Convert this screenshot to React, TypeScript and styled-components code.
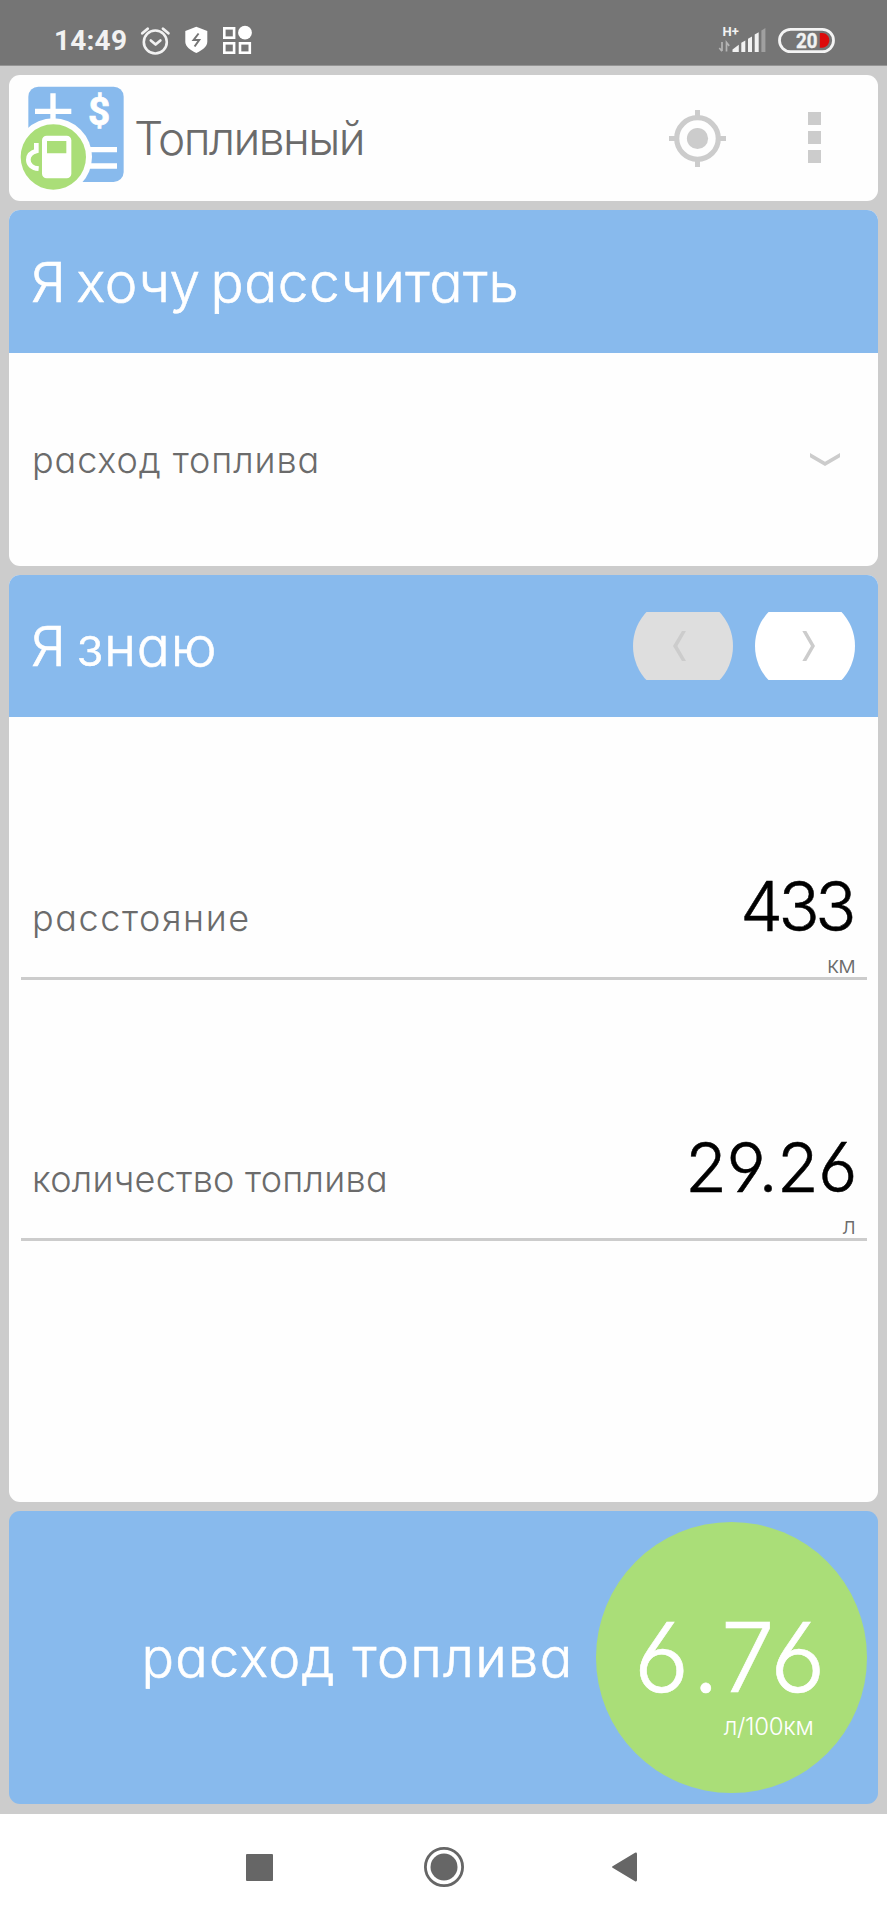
import React from "react";
import styled, { createGlobalStyle } from "styled-components";

const color = {
  blue: "#88baed",
  green: "#aade78",
  grey: "#cccccc",
  text: "#6b6b6b",
  surface: "#fefefe",
  status: "#757575",
  nav: "#666666",
};

const GlobalStyle = createGlobalStyle`
  * { box-sizing: border-box; }
  body { margin: 0; background: ${color.grey}; }
  button { border: 0; padding: 0; background: none; font: inherit; }
  svg { display: block; }
`;

const Screen = styled.div`
  width: 887px;
  height: 1920px;
  display: flex;
  flex-direction: column;
  background: ${color.grey};
  font-family: Inter, "Noto Sans", sans-serif;
  font-feature-settings: "cv11", "cv03", "cv04";
  font-weight: 300;
  color: ${color.text};
  overflow: hidden;
`;

const StatusBar = styled.header`
  height: 66px;
  flex: none;
  display: flex;
  justify-content: space-between;
  align-items: flex-start;
  padding: 25px 52px 0 54px;
  background: ${color.status};
  border-bottom: 1px solid #949494;
  font-family: Roboto, sans-serif;
  font-feature-settings: normal;
`;

const StatusGroup = styled.div`
  display: flex;
  align-items: flex-start;
`;

const Clock = styled.span`
  width: 86px;
  font-size: 28px;
  line-height: 32px;
  font-weight: 700;
  letter-spacing: 0.2px;
  color: #f2f2f2;
`;

const Cards = styled.main`
  flex: 1;
  display: flex;
  flex-direction: column;
  gap: 9px;
  padding: 9px 9px 10px;
`;

const Card = styled.section<{ $height: number; $tone?: string }>`
  height: ${(p) => p.$height}px;
  flex: none;
  display: flex;
  flex-direction: column;
  border-radius: 11px;
  overflow: hidden;
  background: ${(p) => p.$tone ?? color.surface};
`;

const AppBar = styled(Card)`
  flex-direction: row;
  align-items: center;
  padding: 0 57px 0 11px;
`;

const AppTitle = styled.h1`
  flex: 1;
  margin: 0 0 0 10px;
  font-size: 46px;
  font-weight: 300;
  letter-spacing: -1.6px;
`;

const BarButton = styled.button<{ $gap?: number }>`
  margin-left: ${(p) => p.$gap ?? 0}px;
`;

const CardHeader = styled.div<{ $height: number }>`
  height: ${(p) => p.$height}px;
  flex: none;
  display: flex;
  align-items: center;
  padding: 0 23px 0 22px;
  background: ${color.blue};
`;

const CardTitle = styled.h2<{ $tracking: number }>`
  flex: 1;
  margin: 0;
  font-size: 55px;
  font-weight: 300;
  -webkit-text-stroke: 0.6px currentColor;
  letter-spacing: ${(p) => p.$tracking}px;
  word-spacing: -6px;
  white-space: nowrap;
  color: #fff;
`;

const StepButton = styled.button<{ $off?: boolean }>`
  width: 100px;
  height: 68px;
  margin-left: 22px;
  display: flex;
  align-items: center;
  justify-content: center;
  clip-path: circle(50px);
  background: ${(p) => (p.$off ? "#dedede" : "#fff")};
`;

const Select = styled.div`
  flex: 1;
  display: flex;
  align-items: center;
  justify-content: space-between;
  padding: 0 38px 0 23px;
`;

const Label = styled.span<{ $tracking: number }>`
  font-size: 36px;
  line-height: 44px;
  letter-spacing: ${(p) => p.$tracking}px;
  white-space: nowrap;
`;

const Field = styled.div`
  height: 261px;
  flex: none;
  margin: 0 11px 0 12px;
  padding: 0 12px 0 11px;
  display: flex;
  flex-direction: column;
  justify-content: flex-end;
  border-bottom: 3px solid ${color.grey};
`;

const Fields = styled.div`
  padding-top: 2px;
`;

const FieldRow = styled.div`
  display: flex;
  align-items: baseline;
  justify-content: space-between;
`;

const Value = styled.span<{ $tracking: number; $inset: number }>`
  margin-right: ${(p) => p.$inset}px;
  font-size: 68px;
  line-height: 72px;
  letter-spacing: ${(p) => p.$tracking}px;
  -webkit-text-stroke: 0.5px currentColor;
  color: #000;
`;

const Unit = styled.span`
  align-self: flex-end;
  margin: 9px 0 -2px;
  font-size: 23px;
  line-height: 28px;
  letter-spacing: -0.8px;
`;

const ResultCard = styled(Card)`
  flex-direction: row;
  align-items: center;
  justify-content: flex-end;
  padding-right: 11.5px;
  color: #fff;
`;

const ResultLabel = styled.span`
  margin-right: 22px;
  font-size: 54px;
  -webkit-text-stroke: 0.6px currentColor;
  letter-spacing: 1.35px;
`;

const ResultCircle = styled.div`
  width: 271px;
  height: 271px;
  display: flex;
  flex-direction: column;
  align-items: flex-end;
  padding-top: 85px;
  border-radius: 50%;
  background: ${color.green};
`;

const ResultValue = styled.span`
  margin-right: 38px;
  font-size: 96px;
  line-height: 100px;
  letter-spacing: 3px;
  -webkit-text-stroke: 0.6px currentColor;
`;

const ResultUnit = styled.span`
  margin: 6px 53px 0 0;
  font-size: 24px;
  line-height: 28px;
  letter-spacing: -0.3px;
`;

const NavBar = styled.nav`
  height: 106px;
  flex: none;
  display: flex;
  align-items: center;
  padding-left: 246px;
  background: #fff;
`;

const NavButton = styled.button<{ $gap?: number }>`
  margin-left: ${(p) => p.$gap ?? 0}px;
`;

const NotificationIcons = () => (
  <svg width="114" height="32" viewBox="140 25 114 32">
    <g fill="none" stroke="#f2f2f2" strokeLinecap="round">
      <circle cx="155.3" cy="42" r="11.5" strokeWidth="2.6" />
      <path d="M150.8 40.4l4.8 4.2 4.8-4.2" strokeWidth="2.6" strokeLinejoin="round" />
      <path d="M142.3 33.3l5.4-4.6M163 28.7l5.4 4.6" strokeWidth="2.8" />
    </g>
    <path d="M196.3 26.8l11 4.2v10.8c0 5-5.2 8.6-11 11.2-5.8-2.6-11-6.2-11-11.2V31z" fill="#fff" />
    <path d="M198.6 33.5l-5 6.5h5.6l-4.6 6.5" fill="none" stroke="#757575" strokeWidth="2" />
    <g fill="none" stroke="#fff" strokeWidth="2.6">
      <rect x="224.3" y="28.3" width="9.8" height="9.4" />
      <rect x="224.3" y="43.3" width="9.8" height="9.4" />
      <rect x="240" y="43.3" width="9.8" height="9.4" />
    </g>
    <circle cx="245" cy="32.7" r="6.9" fill="#fff" />
  </svg>
);

const SignalAndBattery = () => (
  <svg width="118" height="32" viewBox="717 25 118 32">
    <text x="722.6" y="36" fontFamily="Roboto, sans-serif" fontSize="13" fontWeight="700" fill="#f2f2f2">
      H+
    </text>
    <g fill="none" stroke="#b4b4b4" strokeWidth="1.7">
      <path d="M722 42v9M719.3 48l2.7 3.2" />
      <path d="M726.5 51.5V42.5l2.7 3.4" />
    </g>
    <g fill="#f2f2f2">
      <path d="M732.5 52v-2.6l6.3-4.6V52z" />
      <path d="M741.3 52v-9.2l4-2.4V52z" />
      <path d="M748 52V38.8l4-2.4V52z" />
      <path d="M754.7 52V34.6l4-2.4V52z" />
    </g>
    <path d="M761.4 52V30.5l4-2.4V52z" fill="#a0a0a0" />
    <rect x="779.5" y="29.3" width="54" height="22.4" rx="11.2" fill="none" stroke="#f4f4f4" strokeWidth="2.8" />
    <text x="796" y="47.8" textLength="21.5" lengthAdjust="spacingAndGlyphs" fontFamily="Roboto, sans-serif" fontSize="21" fontWeight="700" fill="#f2f2f2" stroke="#f2f2f2" strokeWidth="0.4">
      20
    </text>
    <path d="M819.8 33h2.5c4 0 7 3.3 7 7.3s-3 7.4-7 7.4h-2.5z" fill="#dc0a0a" />
  </svg>
);

const Logo = () => (
  <svg width="104" height="104" viewBox="60 63 312 312">
    <rect x="85" y="65" width="286" height="286" rx="30" fill={color.blue} />
    <path d="M105 139h109M159 85v90M265 254h86M265 303h86" stroke="#fff" strokeWidth="16" />
    <text x="297" y="180" textAnchor="middle" fontFamily="Roboto, sans-serif" fontSize="116" fontWeight="700" fill="#fff" stroke="#fff" strokeWidth="2">
      $
    </text>
    <circle cx="160" cy="276" r="116" fill={color.surface} />
    <circle cx="160" cy="276" r="98" fill={color.green} />
    <rect x="126" y="212" width="88" height="128" rx="14" fill="#fff" />
    <path d="M141 228h58v37h-58z" fill={color.green} />
    <path d="M109 234v24c-15 4-24 12-24 26s10 25 31 27" fill="none" stroke="#fff" strokeWidth="14" />
  </svg>
);

const TargetIcon = () => (
  <svg width="57" height="57" viewBox="0 0 57 57" fill={color.grey}>
    <circle cx="28.5" cy="28.5" r="20.8" fill="none" stroke={color.grey} strokeWidth="5.2" />
    <circle cx="28.5" cy="28.5" r="10.6" />
    <path d="M26 0h5v8h-5zM26 49h5v8h-5zM0 26h8v5H0zM49 26h8v5h-8z" />
  </svg>
);

const MoreIcon = () => (
  <svg width="13" height="52" viewBox="0 0 13 52" fill={color.grey}>
    <path d="M0 0h13v13H0zM0 19h13v13H0zM0 38h13v13H0z" />
  </svg>
);

const DownIcon = () => (
  <svg width="30" height="13" viewBox="0 0 90 39">
    <path d="M0 0l45 26L90 0v13L45 39 0 13z" fill={color.grey} />
  </svg>
);

const PreviousIcon = () => (
  <svg width="20" height="30" viewBox="0 0 60 90">
    <path d="M27 0h12L13 45l26 45H27L0 45z" fill={color.grey} />
  </svg>
);

const NextIcon = () => (
  <svg width="20" height="30" viewBox="0 0 60 90">
    <path d="M22 0h12l26 45-26 45H22l26-45z" fill={color.grey} />
  </svg>
);

type FieldProps = {
  label: string;
  value: string;
  unit: string;
  tracking: number;
  valueTracking: number;
  inset: number;
};

const InputField = ({ label, value, unit, tracking, valueTracking, inset }: FieldProps) => (
  <Field>
    <FieldRow>
      <Label $tracking={tracking}>{label}</Label>
      <Value $tracking={valueTracking} $inset={inset}>
        {value}
      </Value>
    </FieldRow>
    <Unit>{unit}</Unit>
  </Field>
);

export default function App() {
  return (
    <Screen>
      <GlobalStyle />
      <StatusBar>
        <StatusGroup>
          <Clock>14:49</Clock>
          <NotificationIcons />
        </StatusGroup>
        <SignalAndBattery />
      </StatusBar>
      <Cards>
        <AppBar $height={126}>
          <Logo />
          <AppTitle>Топливный</AppTitle>
          <BarButton aria-label="location">
            <TargetIcon />
          </BarButton>
          <BarButton aria-label="menu" $gap={82}>
            <MoreIcon />
          </BarButton>
        </AppBar>
        <Card $height={356}>
          <CardHeader $height={143}>
            <CardTitle $tracking={0.5}>Я хочу рассчитать</CardTitle>
          </CardHeader>
          <Select>
            <Label $tracking={0.9}>расход топлива</Label>
            <DownIcon />
          </Select>
        </Card>
        <Card $height={927}>
          <CardHeader $height={142}>
            <CardTitle $tracking={0.7}>Я знаю</CardTitle>
            <StepButton $off aria-label="previous">
              <PreviousIcon />
            </StepButton>
            <StepButton aria-label="next">
              <NextIcon />
            </StepButton>
          </CardHeader>
          <Fields>
            <InputField label="расстояние" value="433" unit="км" tracking={1.6} valueTracking={-4.5} inset={3} />
            <InputField label="количество топлива" value="29.26" unit="л" tracking={0.25} valueTracking={-0.5} inset={-2} />
          </Fields>
        </Card>
        <ResultCard $height={293} $tone={color.blue}>
          <ResultLabel>расход топлива</ResultLabel>
          <ResultCircle>
            <ResultValue>6.76</ResultValue>
            <ResultUnit>л/100км</ResultUnit>
          </ResultCircle>
        </ResultCard>
      </Cards>
      <NavBar>
        <NavButton aria-label="recent">
          <svg width="27" height="27" viewBox="0 0 27 27">
            <rect width="27" height="27" rx="1" fill={color.nav} />
          </svg>
        </NavButton>
        <NavButton aria-label="home" $gap={151}>
          <svg width="40" height="40" viewBox="0 0 40 40">
            <circle cx="20" cy="20" r="18.6" fill="none" stroke={color.nav} strokeWidth="2.8" />
            <circle cx="20" cy="20" r="13.5" fill={color.nav} />
          </svg>
        </NavButton>
        <NavButton aria-label="back" $gap={148}>
          <svg width="25" height="30" viewBox="0 0 25 30">
            <path d="M1 14L23 .7Q25 0 25 2v26q0 2-2 1.3L1 16q-2-1 0-2z" fill={color.nav} />
          </svg>
        </NavButton>
      </NavBar>
    </Screen>
  );
}
